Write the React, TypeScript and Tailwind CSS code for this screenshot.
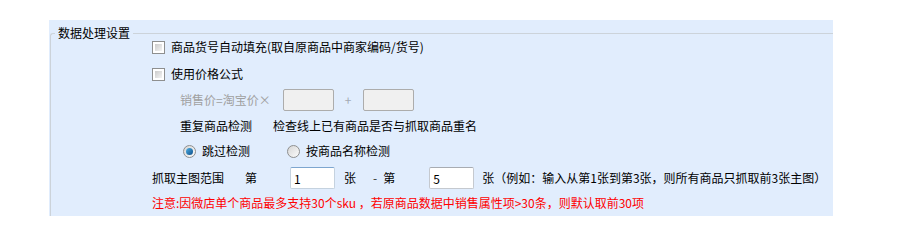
import React from 'react';

const font = { fontFamily: '"Noto Sans CJK SC", "Microsoft YaHei", sans-serif' };

function Checkbox() {
  return (
    <span className="inline-block w-[13px] h-[13px] border border-[#8e8f8f] bg-white p-[2px] shrink-0">
      <span className="block w-full h-full bg-gradient-to-br from-[#cbcbcb] to-[#f4f4f4]" />
    </span>
  );
}

function Radio({ checked }: { checked?: boolean }) {
  return (
    <span className="inline-flex items-center justify-center w-[13px] h-[13px] rounded-full border border-[#8e8f8f] bg-gradient-to-br from-[#d6d6d6] to-[#fbfbfb] shrink-0">
      {checked && (
        <span className="block w-[7px] h-[7px] rounded-full bg-gradient-to-br from-[#4fb1e6] to-[#0e4f8a]" />
      )}
    </span>
  );
}

export default function App() {
  return (
    <div className="w-[922px] h-[247px] bg-white pt-5 pl-[49px] text-[12px] text-black" style={font}>
      <div className="w-[784px] h-[196px] bg-[#e1edfd] overflow-hidden pt-[6px] pl-[1px]">
        <fieldset className="w-[784px] h-[220px] border-l border-t border-[#ccd3da] rounded-tl-[3px] p-0 m-0 min-w-0">
          <legend className="ml-[4px] px-[3px] leading-[14px]">数据处理设置</legend>

          <div className="pl-[101px] -mt-[3px] flex flex-col">
            <label className="h-5 flex items-center gap-[6px]">
              <Checkbox />
              <span>商品货号自动填充(取自原商品中商家编码/货号)</span>
            </label>

            <label className="h-5 mt-[7px] flex items-center gap-[6px]">
              <Checkbox />
              <span>使用价格公式</span>
            </label>

            <div className="h-[22px] mt-[5px] pl-[28px] flex items-center text-[#a0a0a0]">
              <span>销售价=淘宝价×</span>
              <span className="ml-[12px] w-[51px] h-[22px] border border-[#acacac] rounded-[2px] bg-[#f0f0f0]" />
              <span className="w-[29px] text-center text-[#a3a9b3]">+</span>
              <span className="w-[51px] h-[22px] border border-[#acacac] rounded-[2px] bg-[#f0f0f0]" />
            </div>

            <div className="h-5 mt-[5px] pl-[28px] flex items-center">
              <span>重复商品检测</span>
              <span className="ml-[21px]">检查线上已有商品是否与抓取商品重名</span>
            </div>

            <div className="h-5 mt-[5px] pl-[31px] flex items-center">
              <label className="flex items-center gap-[6px]">
                <Radio checked />
                <span>跳过检测</span>
              </label>
              <label className="ml-[37px] flex items-center gap-[6px]">
                <Radio />
                <span>按商品名称检测</span>
              </label>
            </div>

            <div className="h-[22px] mt-[6px] flex items-center">
              <span>抓取主图范围</span>
              <span className="ml-[21px]">第</span>
              <input
                readOnly
                defaultValue="1"
                className="ml-[33px] w-[45px] h-[22px] px-[3px] bg-white border border-[#c5d2df] border-t-[#7ea6cf] rounded-[2px] text-[12px] outline-none"
              />
              <span className="ml-[9px]">张</span>
              <span className="ml-[17px] text-[#333]">-</span>
              <span className="ml-[6px]">第</span>
              <input
                readOnly
                defaultValue="5"
                className="ml-[34px] w-[45px] h-[22px] px-[3px] bg-white border border-[#c5c9cf] border-t-[#a8acb2] rounded-[2px] text-[12px] outline-none"
              />
              <span className="ml-[8px]">张（例如：输入从第1张到第3张，则所有商品只抓取前3张主图）</span>
            </div>

            <div className="h-5 mt-[4px] flex items-center text-[#ff0000]">
              注意:因微店单个商品最多支持30个sku ，若原商品数据中销售属性项&gt;30条，则默认取前30项
            </div>
          </div>
        </fieldset>
      </div>
    </div>
  );
}
